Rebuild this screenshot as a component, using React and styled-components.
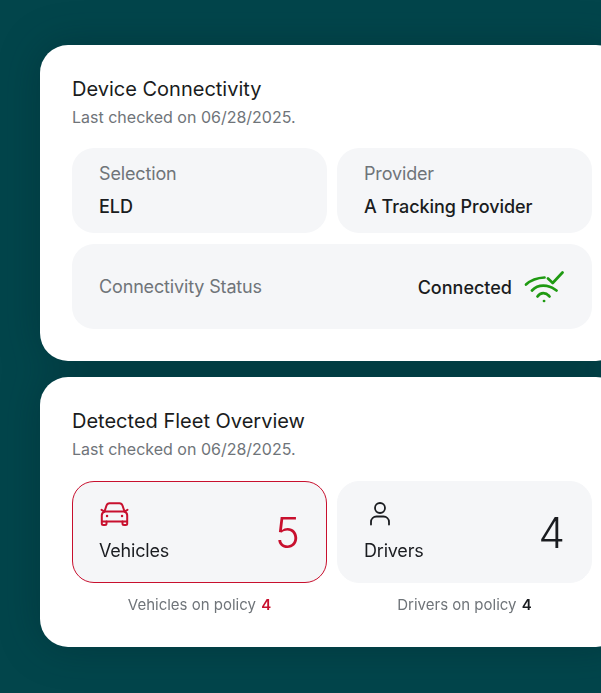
import React from 'react';
import styled, { createGlobalStyle } from 'styled-components';

const RED = '#c8102e';
const INK = '#1a1c20';
const GREY = '#6f7479';
const TEAL = '#02454b';

const GlobalStyle = createGlobalStyle`
  html, body {
    margin: 0;
    padding: 0;
    background: ${TEAL};
    overflow: hidden;
  }
  * {
    box-sizing: border-box;
  }
`;

const Page = styled.div`
  width: 601px;
  height: 693px;
  overflow: hidden;
  padding: 45px 0 0 40px;
  background: ${TEAL};
  font-family: Inter, 'Liberation Sans', sans-serif;
`;

const Stack = styled.div`
  display: flex;
  flex-direction: column;
  gap: 16px;
  width: 584px;
  filter: drop-shadow(0 0 20px rgba(0, 30, 36, 0.32));
`;

const Card = styled.section`
  flex: none;
  height: ${({ $height }) => $height}px;
  padding: 31px 32px 0;
  background: #fff;
  border-radius: 28px;
`;

const Title = styled.h2`
  margin: 0;
  font-size: 20px;
  line-height: 26px;
  font-weight: 400;
  color: ${INK};
`;

const Sub = styled.p`
  margin: 5px 0 0;
  font-size: 16px;
  line-height: 20px;
  color: ${GREY};
`;

const Grid = styled.div`
  margin-top: ${({ $top }) => $top}px;
  display: grid;
  grid-template-columns: 255px 255px;
  gap: 11px 10px;
`;

const Panel = styled.div`
  background: #f5f6f8;
  border-radius: 22px;
  height: 85px;
  padding: 14px 27px;
`;

const WidePanel = styled(Panel)`
  grid-column: 1 / -1;
  display: flex;
  align-items: center;
  justify-content: space-between;
  padding: 1px 28px 0 27px;
`;

const Label = styled.div`
  font-size: 18px;
  line-height: 24px;
  letter-spacing: -0.15px;
  color: ${GREY};
`;

const Value = styled.div`
  margin-top: 9px;
  font-size: 18px;
  line-height: 24px;
  font-weight: 500;
  letter-spacing: -0.05px;
  color: ${INK};
`;

const Status = styled.div`
  display: flex;
  align-items: center;
  gap: 12px;
  font-size: 18px;
  font-weight: 500;
  color: ${INK};
`;

const Stat = styled.div`
  height: 102px;
  padding: 0 26px;
  display: flex;
  align-items: center;
  justify-content: space-between;
  border-radius: 22px;
  background: #f5f6f8;
  border: 1.5px solid ${({ $alert }) => ($alert ? RED : '#f5f6f8')};
`;

const StatInfo = styled.div`
  display: flex;
  flex-direction: column;
  gap: 12px;
  font-size: 18px;
  line-height: 24px;
  letter-spacing: -0.2px;
  color: ${INK};

  svg {
    display: block;
    color: ${({ $alert }) => ($alert ? RED : INK)};
  }
`;

const StatCount = styled.div`
  margin-top: 2px;
  font-size: 42px;
  font-weight: 300;
  line-height: 1;
  color: ${({ $alert }) => ($alert ? RED : INK)};
`;

const Note = styled.div`
  margin-top: 1px;
  text-align: center;
  font-size: 15px;
  line-height: 20px;
  color: ${GREY};

  b {
    margin-left: 1px;
    font-weight: 600;
    color: ${({ $alert }) => ($alert ? RED : INK)};
  }
`;

const WifiCheck = () => (
  <svg width="40" height="32" viewBox="0 0 40 32" fill="none" stroke="#1f9a12" strokeWidth="2.7" strokeLinecap="round" strokeLinejoin="round">
    <path d="M2 13.5C7 9 13 6.8 20.5 6.5" />
    <path d="M8 19.5C14 13 24 13 32.5 19.5" />
    <path d="M13.5 25.5C16.5 21 22 21 25.5 25.5" />
    <path d="M20 30h.1" />
    <path d="M24 7.5L28.7 12L38.5 1.5" />
  </svg>
);

const CarIcon = () => (
  <svg width="32" height="26" viewBox="0 0 32 26" fill="none" stroke="currentColor" strokeWidth="2" strokeLinejoin="round" strokeLinecap="round">
    <path d="M5.5 10.5L7.5 4.5C8 3 9 2.2 10.5 2.2H20.5C22 2.2 23 3 23.5 4.5L25.5 10.5" />
    <path d="M2.5 8.8L5.5 10.5H25.5L28.5 8.8" />
    <path d="M5.5 10.5C3.8 11.2 2.8 12.5 2.8 14.5V22.5C2.8 23.4 3.4 24 4.3 24H6C6.9 24 7.5 23.4 7.5 22.5V20.5H23.5V22.5C23.5 23.4 24.1 24 25 24H26.7C27.6 24 28.2 23.4 28.2 22.5V14.5C28.2 12.5 27.2 11.2 25.5 10.5" />
    <path d="M3 20.5H7.5M23.5 20.5H28" />
    <path d="M8 15h.1M23 15h.1" strokeWidth="2.4" />
  </svg>
);

const PersonIcon = () => (
  <svg width="32" height="26" viewBox="0 0 32 26" fill="none" stroke="currentColor" strokeWidth="1.8" strokeLinecap="round">
    <circle cx="16" cy="7" r="5" />
    <path d="M7 23.5V21C7 17.8 9.5 15.5 12.5 15.5H19.5C22.5 15.5 25 17.8 25 21V23.5" />
  </svg>
);

export default function App() {
  return (
    <Page>
      <GlobalStyle />
      <Stack>
        <Card $height={316}>
          <Title>Device Connectivity</Title>
          <Sub>Last checked on 06/28/2025.</Sub>
          <Grid $top={21}>
            <Panel>
              <Label>Selection</Label>
              <Value>ELD</Value>
            </Panel>
            <Panel>
              <Label>Provider</Label>
              <Value>A Tracking Provider</Value>
            </Panel>
            <WidePanel>
              <Label>Connectivity Status</Label>
              <Status>
                Connected
                <WifiCheck />
              </Status>
            </WidePanel>
          </Grid>
        </Card>
        <Card $height={270}>
          <Title>Detected Fleet Overview</Title>
          <Sub>Last checked on 06/28/2025.</Sub>
          <Grid $top={22}>
            <Stat $alert>
              <StatInfo $alert>
                <CarIcon />
                <span>Vehicles</span>
              </StatInfo>
              <StatCount $alert>5</StatCount>
            </Stat>
            <Stat>
              <StatInfo>
                <PersonIcon />
                <span>Drivers</span>
              </StatInfo>
              <StatCount>4</StatCount>
            </Stat>
            <Note $alert>Vehicles on policy <b>4</b></Note>
            <Note>Drivers on policy <b>4</b></Note>
          </Grid>
        </Card>
      </Stack>
    </Page>
  );
}
